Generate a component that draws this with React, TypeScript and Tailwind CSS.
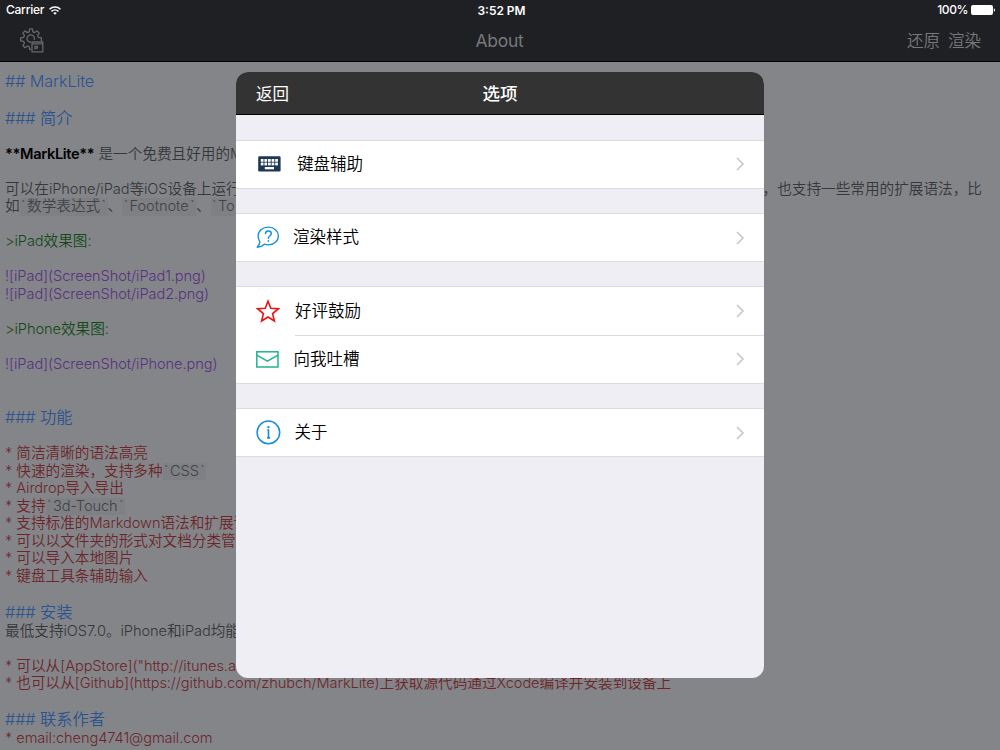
import type { ReactNode } from "react";

/* Latin runs are tracked separately from the Chinese characters around them. */
function Mixed({ text, latin = "tracking-[-0.09px]" }: { text: string; latin?: string }) {
  return (
    <>
      {text.split(/([\x20-\x7e]+)/).map((part, i) =>
        i % 2 === 1 ? (
          <span key={i} className={latin}>
            {part}
          </span>
        ) : (
          part
        ),
      )}
    </>
  );
}

function Heading({ text }: { text: string }) {
  return (
    <div className="h-[19.5px] text-[16.25px] leading-[19.5px] text-[#2a5390]">
      <Mixed text={text} latin="tracking-[-0.12px]" />
    </div>
  );
}

function Line({ color = "text-[#35373a]", children }: { color?: string; children?: ReactNode }) {
  return <div className={`h-[17.53px] text-[14.63px] leading-[17.53px] ${color}`}>{children}</div>;
}

function Code({ text, open = false }: { text: string; open?: boolean }) {
  return (
    <span className="inline-block h-[17.53px] bg-[#7f8084] align-top leading-[17.53px] text-[#404246]">
      <span className="inline-block w-[7.4px] text-center">`</span>
      <Mixed text={text} />
      {!open && <span className="inline-block w-[7.4px] text-center">`</span>}
    </span>
  );
}

const RED = "text-[#6c262b]";
const GREEN = "text-[#124a16]";
const PURPLE = "text-[#593181]";

function Editor() {
  return (
    <main className="flex flex-col pt-[9.2px] pl-[5px] font-[350] whitespace-pre">
      <Heading text="## MarkLite" />
      <Line />
      <Heading text="### 简介" />
      <Line />
      <Line>
        <b className="font-semibold text-black">
          <Mixed text="**MarkLite**" latin="tracking-[-0.35px]" />
        </b>
        <Mixed text=" 是一个免费且好用的M" />
      </Line>
      <Line />
      <div className="flex w-[977px] justify-between">
        <Line><Mixed text="可以在iPhone/iPad等iOS设备上运行" /></Line>
        <Line>，也支持一些常用的扩展语法，比</Line>
      </div>
      <Line>
        如<Code text="数学表达式" />、<Code text="Footnote" />、<Code text="To" open />
      </Line>
      <Line />
      <Line color={GREEN}><Mixed text=">iPad效果图:" /></Line>
      <Line />
      <Line color={PURPLE}><Mixed text="![iPad](ScreenShot/iPad1.png)" /></Line>
      <Line color={PURPLE}><Mixed text="![iPad](ScreenShot/iPad2.png)" /></Line>
      <Line />
      <Line color={GREEN}><Mixed text=">iPhone效果图:" /></Line>
      <Line />
      <Line color={PURPLE}><Mixed text="![iPad](ScreenShot/iPhone.png)" /></Line>
      <Line />
      <Line />
      <Heading text="### 功能" />
      <Line />
      <Line color={RED}><Mixed text="* 简洁清晰的语法高亮" /></Line>
      <Line color={RED}><Mixed text="* 快速的渲染，支持多种" /><Code text="CSS" /></Line>
      <Line color={RED}><Mixed text="* Airdrop导入导出" /></Line>
      <Line color={RED}><Mixed text="* 支持" /><Code text="3d-Touch" /></Line>
      <Line color={RED}><Mixed text="* 支持标准的Markdown语法和扩展语" /></Line>
      <Line color={RED}><Mixed text="* 可以以文件夹的形式对文档分类管" /></Line>
      <Line color={RED}><Mixed text="* 可以导入本地图片" /></Line>
      <Line color={RED}><Mixed text="* 键盘工具条辅助输入" /></Line>
      <Line />
      <Heading text="### 安装" />
      <Line><Mixed text="最低支持iOS7.0。iPhone和iPad均能" /></Line>
      <Line />
      <Line color={RED}><Mixed text={'* 可以从[AppStore]("http://itunes.a'} /></Line>
      <Line color={RED}>
        <Mixed text="* 也可以从[Github](https://github.com/zhubch/MarkLite)上获取源代码通过Xcode编译并安装到设备上" />
      </Line>
      <Line />
      <Heading text="### 联系作者" />
      <Line color={RED}><Mixed text="* email:cheng4741@gmail.com" /></Line>
    </main>
  );
}

function WifiIcon() {
  return (
    <svg className="h-[9px] w-[12px]" viewBox="0 0 12 9" fill="none" stroke="#fff" strokeWidth="1.5">
      <path d="M.5 3.3a7.8 7.8 0 0 1 11 0M2.5 5.4a5 5 0 0 1 7 0" />
      <path d="M6 8.8 4.2 7a2.6 2.6 0 0 1 3.6 0Z" fill="#fff" stroke="none" />
    </svg>
  );
}

function BatteryIcon() {
  return (
    <svg className="h-[10px] w-[25px]" viewBox="0 0 25 10" fill="#fff">
      <rect x="0" y="0" width="22" height="10" rx="2" />
      <path d="M22.8 3.2c1.7.5 1.7 3.1 0 3.6Z" />
    </svg>
  );
}

function SettingsIcon() {
  return (
    <svg className="h-[27px] w-[27px]" viewBox="0 0 27 27" fill="none" stroke="#66686b" strokeWidth="1.3" strokeLinejoin="round">
      <path d="M13.2 22.5h-1.5l-.5-2.8-1.8-.7-2.3 1.7-2.2-2.2 1.5-2.4-.8-1.8-3-.5v-3l3-.5.8-1.9-1.6-2.3L7 3.9l2.4 1.7 1.8-.8.4-3h2.8l.5 3 1.8.8 2.3-1.7 2.2 2.2-1.6 2.3.8 1.9 3 .5v3.2" />
      <path d="M13.2 15.2a3.7 3.7 0 1 1 3-2.4" />
      <rect x="14" y="15" width="10.8" height="9.8" />
      <path d="M14 16.8h10.8M17 22.5v-3.2h2.5v1.8h-2.5" />
    </svg>
  );
}

function KeyboardIcon() {
  return (
    <svg className="h-[16px] w-[23px]" viewBox="0 0 23 16">
      <rect x=".2" y=".2" width="22.4" height="15.4" rx="1.3" fill="#1d3654" />
      <g fill="#fff">
        {[2.8, 6.4, 10, 13.6, 17.2].map((x) => (
          <rect key={x} x={x} y="3" width="2.7" height="2.8" />
        ))}
        {[2.8, 6.4, 10, 13.6, 17.2].map((x) => (
          <rect key={x} x={x} y="6.6" width="2.7" height="2.8" />
        ))}
        <rect x="6.8" y="11" width="9.2" height="2.3" />
      </g>
    </svg>
  );
}

function HelpIcon() {
  return (
    <svg className="h-[23px] w-[24px]" viewBox="0 0 24 23" fill="none" stroke="#1690e0" strokeWidth="1.4" strokeLinecap="round" strokeLinejoin="round">
      <path d="M12.3 1.1c5.9 0 10.1 3.9 10.1 8.9s-4.2 8.9-10.1 8.9c-1.4 0-2.7-.3-3.9-.7-1.9 1.9-4 2.8-7.2 3 1.7-1.7 2.6-3.3 2.6-5.5C2.7 14 2.1 12 2.1 10c0-5 4.3-8.9 10.2-8.9Z" />
      <path d="M9.5 7.6c.1-1.7 1.3-2.6 2.9-2.6s2.9 1 2.9 2.5c0 2.2-2.9 2.2-2.9 4.7" />
      <path d="M12.4 14.9v.1" strokeWidth="1.7" />
    </svg>
  );
}

function StarIcon() {
  return (
    <svg className="h-[24px] w-[24px]" viewBox="0 0 24 24" fill="none" stroke="#ee1111" strokeWidth="1.6" strokeLinejoin="miter">
      <path d="m12 2.2 2.8 7 7.6.5-5.8 4.9 1.8 7.4-6.4-4-6.4 4 1.8-7.4-5.8-4.9 7.6-.5Z" />
    </svg>
  );
}

function MailIcon() {
  return (
    <svg className="h-[17px] w-[23px]" viewBox="0 0 23 17" fill="none" stroke="#20b491" strokeWidth="1.5">
      <rect x=".8" y=".8" width="21.2" height="15.2" />
      <path d="m.8 4.2 10.6 6 10.6-6" />
    </svg>
  );
}

function InfoIcon() {
  return (
    <svg className="h-[25px] w-[25px]" viewBox="0 0 25 25" fill="none" stroke="#1a8cdd" strokeWidth="1.5">
      <circle cx="12.4" cy="12.4" r="11.3" />
      <path d="M11.3 10.1h1.2v7.7M11 17.9h3.1" strokeWidth="1.6" />
      <circle cx="12.4" cy="7.1" r="1.2" fill="#1a8cdd" stroke="none" />
    </svg>
  );
}

function Chevron() {
  return (
    <svg className="ml-auto h-[14px] w-[9px]" viewBox="0 0 9 14" fill="none" stroke="#c7c7cc" strokeWidth="1.6">
      <path d="m1 1 6 6-6 6" />
    </svg>
  );
}

function Row({ icon, gap, label }: { icon: ReactNode; gap: string; label: string }) {
  return (
    <div className="flex h-[47.2px] items-center pr-[19px] pl-[19px] text-[16.5px] font-[350] text-black">
      <span className={`flex shrink-0 items-center ${gap}`}>{icon}</span>
      <span>{label}</span>
      <Chevron />
    </div>
  );
}

function Group({ children }: { children: ReactNode }) {
  return <section className="mb-[24.3px] border-y border-[#dcdce0] bg-white">{children}</section>;
}

export default function App() {
  return (
    <div className="relative h-[750px] w-[1000px] overflow-hidden bg-[#848589] font-['Inter','Noto_Sans_CJK_SC',sans-serif] font-light">
      <header className="h-[62.4px] border-b border-black bg-[#1f2023]">
        <div className="grid h-[20px] grid-cols-3 items-center pr-[4px] pl-[6px] text-[12px] font-medium text-white">
          <div className="flex items-center gap-[5px]">
            <span className="tracking-[-0.25px]">Carrier</span>
            <WifiIcon />
          </div>
          <div className="pt-[1px] pl-[1px] text-center text-[11.9px] font-semibold">3:52 PM</div>
          <div className="flex items-center justify-end gap-[3px]">
            <span className="tracking-[-0.4px]">100%</span>
            <BatteryIcon />
          </div>
        </div>
        <div className="grid h-[41px] grid-cols-3 items-center pr-[19px] pl-[18px] text-[#77787b]">
          <SettingsIcon />
          <div className="pt-[2px] text-center text-[17.5px] font-normal tracking-[-0.3px]">About</div>
          <div className="flex justify-end gap-[8px] pt-[2px] text-[16.5px] font-[350]">
            <span>还原</span>
            <span>渲染</span>
          </div>
        </div>
      </header>

      <Editor />

      <div className="absolute top-[72px] left-[236.4px] flex h-[605.5px] w-[527.2px] flex-col overflow-hidden rounded-[12px] bg-[#efeef4]">
        <div className="grid h-[43px] shrink-0 grid-cols-3 items-center border-b border-black bg-[#333333] px-[19.5px] pt-[2px] text-white">
          <span className="text-[16.5px] font-normal">返回</span>
          <span className="text-center text-[17.5px] font-medium">选项</span>
        </div>
        <div className="flex flex-col pt-[24.5px]">
          <Group>
            <Row icon={<KeyboardIcon />} gap="pl-[2.5px] pr-[16px]" label="键盘辅助" />
          </Group>
          <Group>
            <Row icon={<HelpIcon />} gap="pl-[0.3px] pr-[13.2px]" label="渲染样式" />
          </Group>
          <Group>
            <Row icon={<StarIcon />} gap="pl-[0.5px] pr-[15px]" label="好评鼓励" />
            <div className="ml-[58.5px] h-px bg-[#dcdcdf]" />
            <Row icon={<MailIcon />} gap="pl-[0.3px] pr-[14.7px]" label="向我吐槽" />
          </Group>
          <Group>
            <Row icon={<InfoIcon />} gap="pl-[0.3px] pr-[13.7px]" label="关于" />
          </Group>
        </div>
      </div>
    </div>
  );
}
